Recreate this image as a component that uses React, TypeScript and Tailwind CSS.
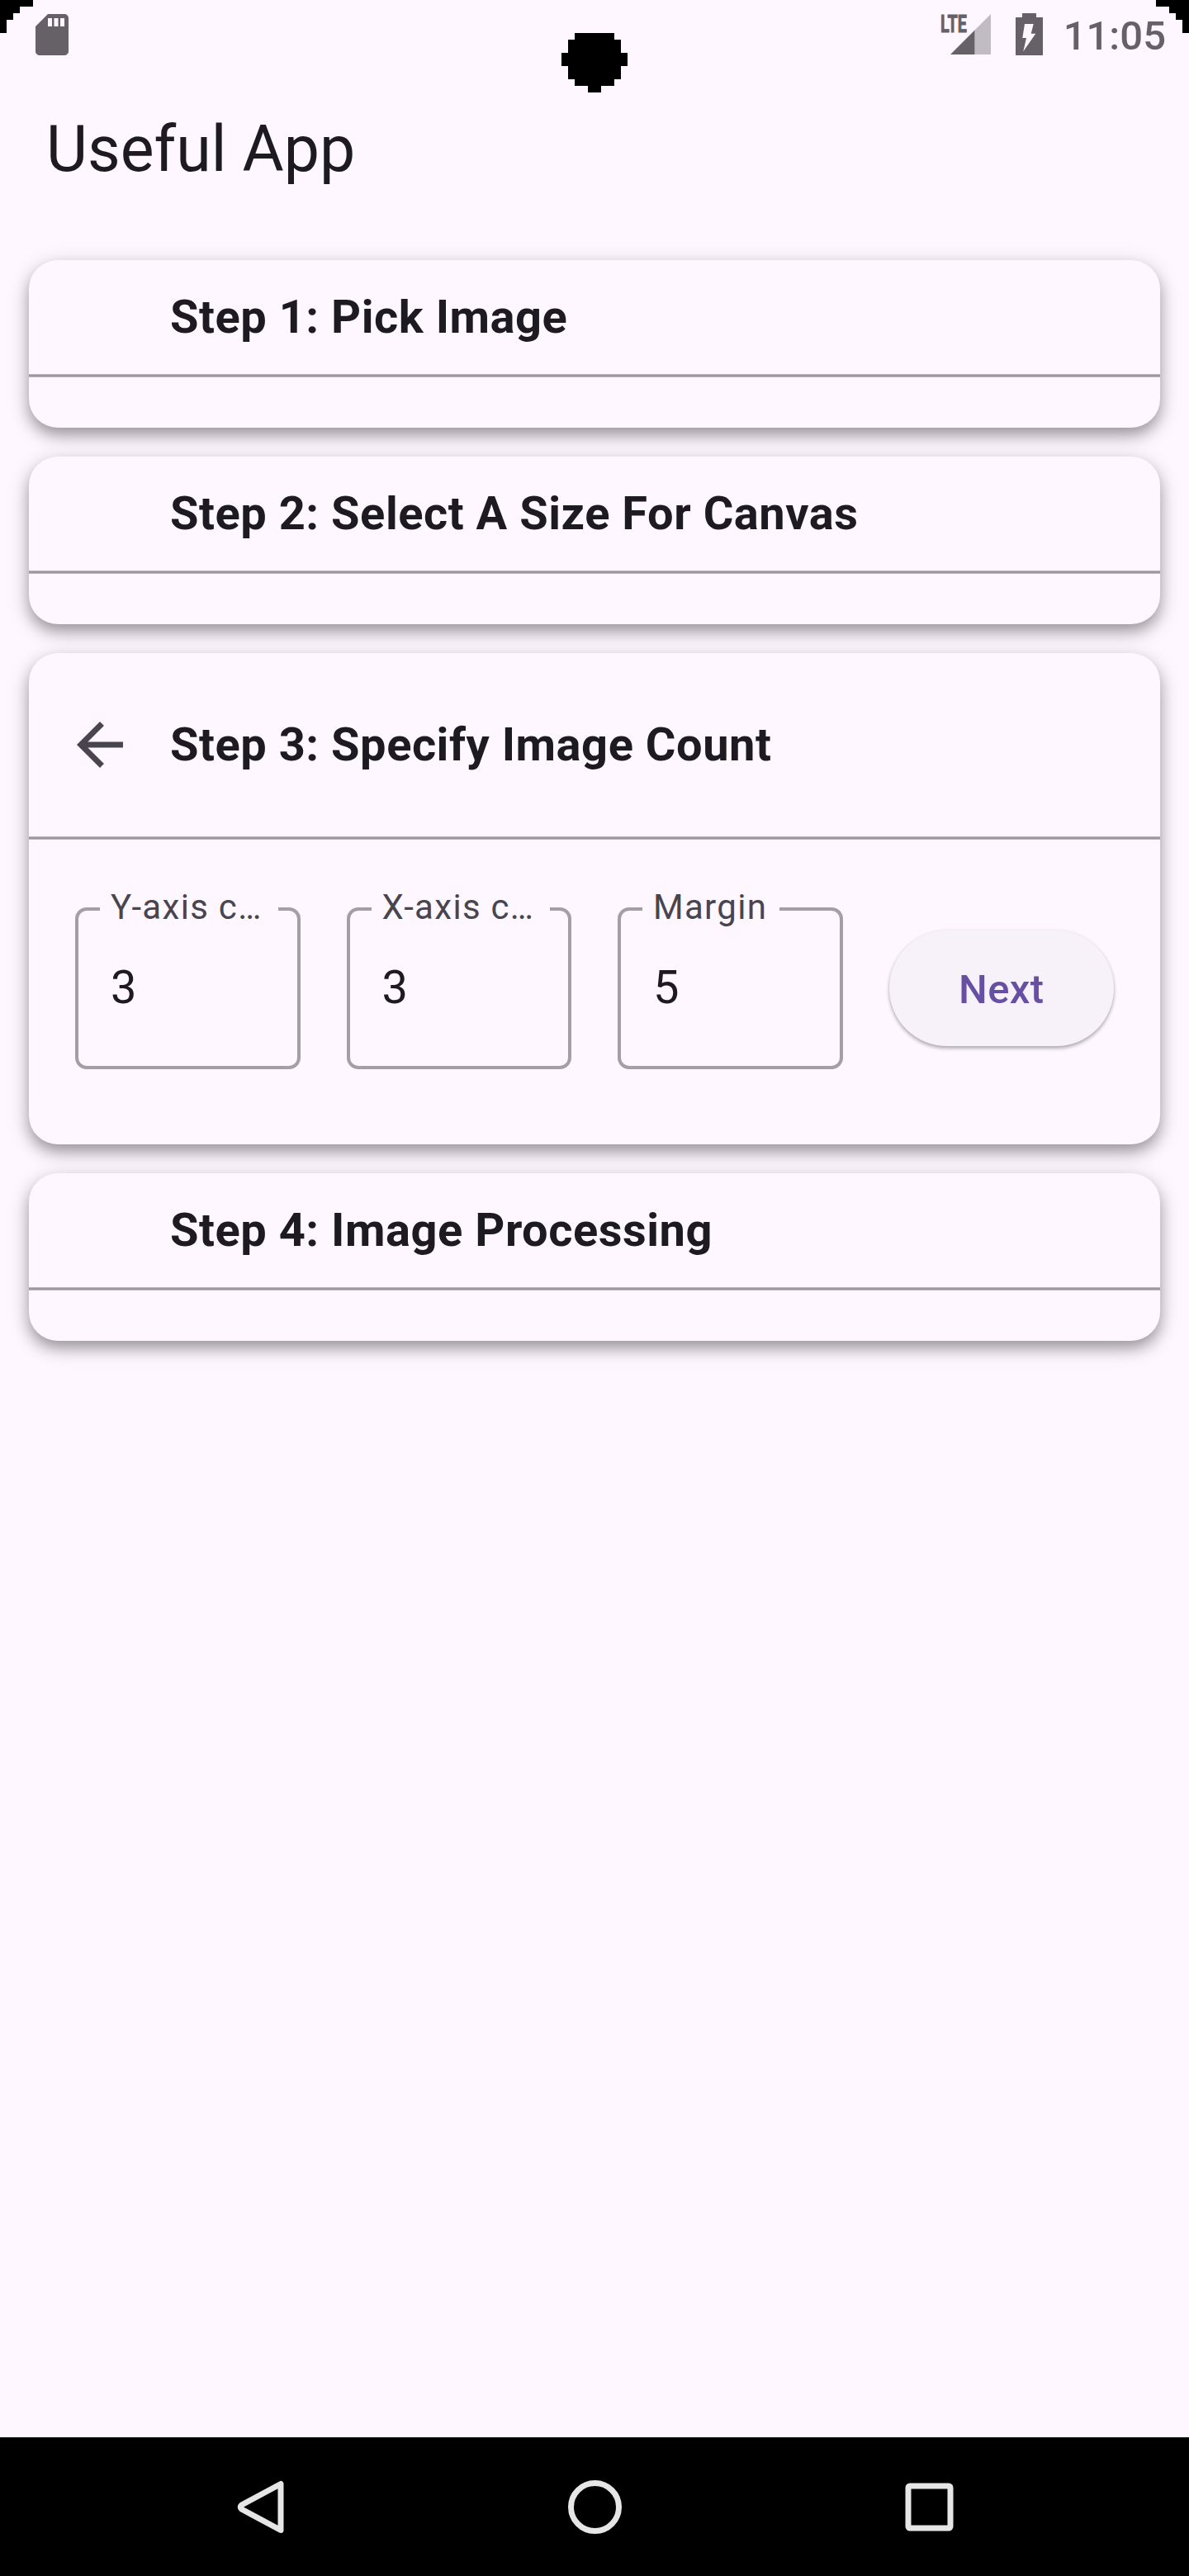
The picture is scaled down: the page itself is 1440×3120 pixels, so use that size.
import type { ReactNode } from "react";

function ScreenCorner({ className }: { className: string }) {
  return (
    <svg className={className} width="40" height="40" viewBox="0 0 40 40" shapeRendering="crispEdges">
      <path d="M0 0H40V8H24V16H16V24H8V40H0Z" fill="#000" />
    </svg>
  );
}

function CameraCutout() {
  return (
    <svg
      className="absolute left-[680px] top-10"
      width="80"
      height="72"
      viewBox="0 0 80 72"
      shapeRendering="crispEdges"
    >
      <path
        d="M16 0H64V8H72V24H80V40H72V56H64V64H48V72H32V64H16V56H8V40H0V24H8V8H16Z"
        fill="#000"
      />
    </svg>
  );
}

function StatusBar() {
  return (
    <div className="flex h-[84px] items-start justify-between pl-[33px] pr-[28px] text-[#656167]">
      <svg className="mt-3" width="60" height="60" viewBox="0 0 24 24" fill="currentColor">
        <path d="M18 2h-8L4 8v12c0 1.1.9 2 2 2h12c1.1 0 2-.9 2-2V4c0-1.1-.9-2-2-2zm-6 6h-2V4h2v4zm3 0h-2V4h2v4zm3 0h-2V4h2v4z" />
      </svg>
      <div className="flex items-start">
        <svg className="mt-3" width="66" height="60" viewBox="0 0 66 60">
          <path d="M65 5V54H45.500V24.500Z" fill="#c1bcc4" />
          <path d="M16 54L45.500 24.500V54Z" fill="currentColor" />
          <text
            x="4"
            y="27"
            fontFamily="Roboto"
            fontWeight="700"
            fontSize="29"
            textLength="32"
            lengthAdjust="spacingAndGlyphs"
            fill="currentColor"
            stroke="currentColor"
            strokeWidth="0.900"
          >
            LTE
          </text>
        </svg>
        <svg className="ml-[29px] mt-4" width="33" height="51" viewBox="0 0 33 51">
          <path d="M8 0H25V5H33V51H0V5H8Z" fill="currentColor" />
          <path d="M11 13H21.700L18.700 24.700H24.300L9.300 46.300L13 30H8.300Z" fill="#fef7ff" />
        </svg>
        <span className="ml-[25px] mt-3 text-[49px] font-medium leading-[64px]">11:05</span>
      </div>
    </div>
  );
}

function Divider() {
  return <div className="h-1 border-y border-[#b9b4bb] bg-[#9c989e]" />;
}

function StepCard({
  title,
  icon,
  tall,
  children,
}: {
  title: string;
  icon?: ReactNode;
  tall?: boolean;
  children?: ReactNode;
}) {
  return (
    <section
      className={`flex flex-col overflow-hidden rounded-[35px] bg-[#fef7ff] shadow-[0_9px_18px_rgba(0,0,0,0.34),0_6px_32px_rgba(0,0,0,0.1)] ${
        tall ? "h-[595px]" : "h-[203px]"
      }`}
    >
      <header className={`flex shrink-0 items-center ${tall ? "h-[222px]" : "h-[138px]"}`}>
        <div className="flex w-[171px] justify-center">{icon}</div>
        <h2 className="text-[56px] font-bold leading-[84px] tracking-[0.525px]">{title}</h2>
      </header>
      <Divider />
      {children}
    </section>
  );
}

function OutlinedField({ label, value, wide }: { label: string; value: string; wide?: boolean }) {
  return (
    <fieldset className="h-[196px] min-w-0 rounded-[14px] border-4 border-[#a39fa5] pl-[26px]">
      <legend
        className={`h-1 whitespace-nowrap pl-[13px] text-[42px] leading-[0px] tracking-[1.3px] text-[#49454f] ${
          wide ? "w-[216px]" : "w-[166px]"
        }`}
      >
        {label}
      </legend>
      <div className="pl-[13px] pt-[51px] text-[56px] leading-[84px]">{value}</div>
    </fieldset>
  );
}

const BackArrow = (
  <svg width="84" height="84" viewBox="0 0 24 24" fill="#49454f">
    <path d="M20 11H7.830l5.590-5.590L12 4l-8 8 8 8 1.410-1.410L7.830 13H20v-2z" />
  </svg>
);

function NavigationBar() {
  return (
    <nav className="flex h-[168px] items-center justify-between bg-black px-[280px]">
      <svg width="80" height="80" viewBox="0 0 80 80" fill="none" stroke="#e6e6e6" strokeWidth="7" strokeLinejoin="round">
        <path d="M60 12.500V68.500L12.500 43C10.800 41.500 10.800 39.500 12.500 38Z" />
      </svg>
      <svg width="80" height="80" viewBox="0 0 80 80" fill="none" stroke="#e6e6e6" strokeWidth="7">
        <circle cx="40.500" cy="40.500" r="29" />
      </svg>
      <svg width="80" height="80" viewBox="0 0 80 80" fill="none" stroke="#e6e6e6" strokeWidth="7">
        <rect x="20" y="15" width="51" height="51" rx="2" />
      </svg>
    </nav>
  );
}

export default function App() {
  return (
    <div className="relative flex h-[3120px] w-[1440px] flex-col overflow-hidden bg-[#fef7ff] font-['Roboto',sans-serif] text-[#1d1b20]">
      <StatusBar />
      <h1 className="flex h-[196px] items-center pb-[3px] pl-14 text-[77px] leading-[98px]">Useful App</h1>
      <main className="flex flex-1 flex-col gap-[35px] px-[35px] pt-[35px]">
        <StepCard title="Step 1: Pick Image" />
        <StepCard title="Step 2: Select A Size For Canvas" />
        <StepCard title="Step 3: Specify Image Count" icon={BackArrow} tall>
          <div className="grid grid-cols-4 items-center gap-14 px-14 pt-[82px]">
            <OutlinedField label="Y-axis c…" value="3" wide />
            <OutlinedField label="X-axis c…" value="3" wide />
            <OutlinedField label="Margin" value="5" />
            <button className="h-[140px] rounded-full bg-[#f7f2fa] pt-[3px] text-[49px] font-medium tracking-[0.350px] text-[#6750a4] shadow-[0_3px_4px_rgba(0,0,0,0.28),0_0_4px_rgba(0,0,0,0.08)]">
              Next
            </button>
          </div>
        </StepCard>
        <StepCard title="Step 4: Image Processing" />
      </main>
      <NavigationBar />
      <ScreenCorner className="absolute left-0 top-0" />
      <ScreenCorner className="absolute right-0 top-0 -scale-x-100" />
      <CameraCutout />
    </div>
  );
}
